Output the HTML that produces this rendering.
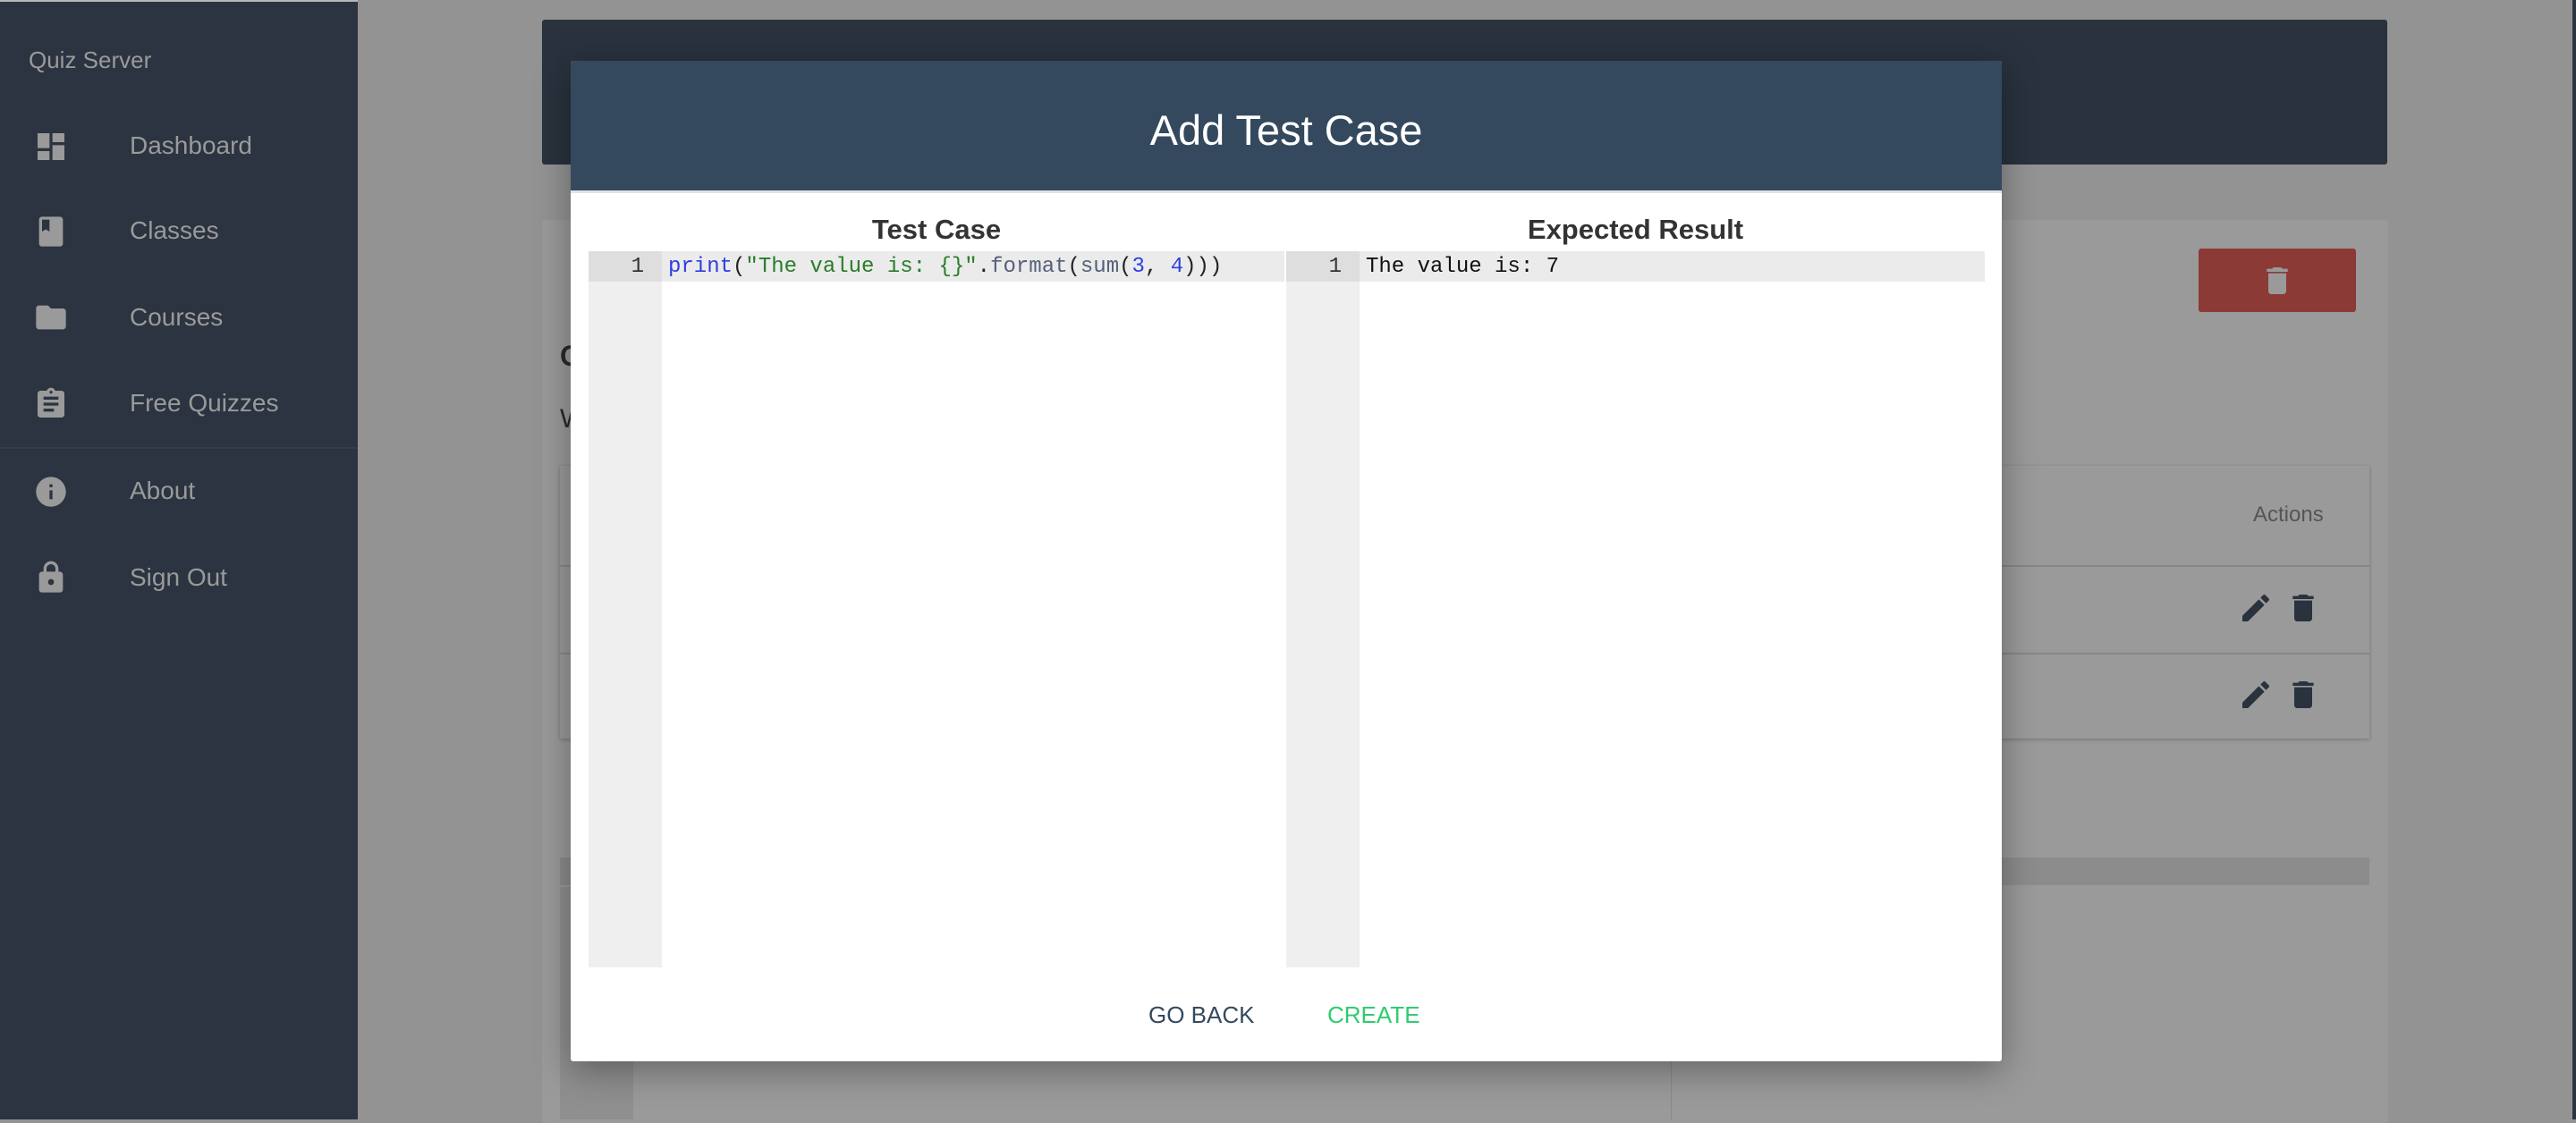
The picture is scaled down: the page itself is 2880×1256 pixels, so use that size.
<!DOCTYPE html>
<html><head><meta charset="utf-8"><style>
*{box-sizing:border-box;margin:0;padding:0}
body{width:2880px;height:1252px;overflow:hidden;background:#939393;font-family:"Liberation Sans",sans-serif;position:relative}
.abs{position:absolute}
#side{left:0;top:0;width:400px;height:1252px;background:#2b3440;border-top:2px solid #b8b8b8}
.nav{position:absolute;left:145px;font-size:28px;color:#9a9a9a;line-height:32px}
.ic{position:absolute;left:37px;width:40px;height:40px}
.code{font-family:"Liberation Mono",monospace;font-size:24px;line-height:34px;white-space:pre}
</style></head><body>
<div id="side" class="abs">
  <div class="abs" style="left:32px;top:50px;font-size:26px;color:#9a9a9a">Quiz Server</div>
  <svg class="ic" style="top:142px" viewBox="0 0 24 24"><path fill="#9a9a9a" d="M3 13h8V3H3v10zm0 8h8v-6H3v6zm10 0h8V11h-8v10zm0-18v6h8V3h-8z"/></svg>
  <div class="nav" style="top:145px">Dashboard</div>
  <svg class="ic" style="top:237px" viewBox="0 0 24 24"><path fill="#9a9a9a" d="M18 2H6c-1.1 0-2 .9-2 2v16c0 1.1.9 2 2 2h12c1.1 0 2-.9 2-2V4c0-1.1-.9-2-2-2zM6 4h5v8l-2.5-1.5L6 12V4z"/></svg>
  <div class="nav" style="top:240px">Classes</div>
  <svg class="ic" style="top:333px" viewBox="0 0 24 24"><path fill="#9a9a9a" d="M10 4H4c-1.1 0-2 .9-2 2v12c0 1.1.9 2 2 2h16c1.1 0 2-.9 2-2V8c0-1.1-.9-2-2-2h-8l-2-2z"/></svg>
  <div class="nav" style="top:337px">Courses</div>
  <svg class="ic" style="top:430px" viewBox="0 0 24 24"><path fill="#9a9a9a" d="M19 3h-4.18C14.4 1.84 13.3 1 12 1c-1.3 0-2.4.84-2.82 2H5c-1.1 0-2 .9-2 2v14c0 1.1.9 2 2 2h14c1.1 0 2-.9 2-2V5c0-1.1-.9-2-2-2zm-7 0c.55 0 1 .45 1 1s-.45 1-1 1-1-.45-1-1 .45-1 1-1zm2 14H7v-2h7v2zm3-4H7v-2h10v2zm0-4H7V7h10v2z"/></svg>
  <div class="nav" style="top:433px">Free Quizzes</div>
  <div class="abs" style="left:0;top:498px;width:400px;height:2px;background:#343e4b"></div>
  <svg class="ic" style="top:528px" viewBox="0 0 24 24"><path fill="#9a9a9a" d="M12 2C6.48 2 2 6.48 2 12s4.48 10 10 10 10-4.48 10-10S17.52 2 12 2zm1 15h-2v-6h2v6zm0-8h-2V7h2v2z"/></svg>
  <div class="nav" style="top:531px">About</div>
  <svg class="ic" style="top:624px" viewBox="0 0 24 24"><path fill="#9a9a9a" d="M18 8h-1V6c0-2.76-2.24-5-5-5S7 3.24 7 6v2H6c-1.1 0-2 .9-2 2v10c0 1.1.9 2 2 2h12c1.1 0 2-.9 2-2V10c0-1.1-.9-2-2-2zm-6 9c-1.1 0-2-.9-2-2s.9-2 2-2 2 .9 2 2-.9 2-2 2zM9 8V6c0-1.66 1.34-3 3-3s3 1.34 3 3v2H9z"/></svg>
  <div class="nav" style="top:628px">Sign Out</div>
</div>
<div class="abs" style="left:2876px;top:0;width:4px;height:1252px;background:#2b3440"></div>
<div class="abs" style="left:606px;top:22px;width:2063px;height:162px;background:#29323d;border-radius:3px"></div>
<div class="abs" style="left:606px;top:246px;width:2064px;height:1010px;background:#9a9a9a;border-radius:3px"></div>
<div class="abs" style="left:2458px;top:278px;width:176px;height:71px;background:#8b3a35;border-radius:3px"></div>
<svg class="abs" style="left:2526px;top:292px;width:40px;height:44px" viewBox="0 0 24 24"><path fill="#9a9a9a" d="M6 19c0 1.1.9 2 2 2h8c1.1 0 2-.9 2-2V7H6v12zM19 4h-3.5l-1-1h-5l-1 1H5v2h14V4z"/></svg>
<div class="abs" style="left:626px;top:380px;font-size:32px;font-weight:bold;color:#2a2a2a">C</div>
<div class="abs" style="left:626px;top:452px;font-size:30px;color:#2a2a2a">W</div>
<div class="abs" style="left:626px;top:521px;width:2023px;height:305px;background:#9a9a9a;box-shadow:0 1px 4px rgba(0,0,0,.25)"></div>
<div class="abs" style="left:2519px;top:562px;font-size:24px;color:#555">Actions</div>
<div class="abs" style="left:626px;top:632px;width:2023px;height:2px;background:#878787"></div>
<div class="abs" style="left:626px;top:730px;width:2023px;height:2px;background:#878787"></div>
<svg class="abs" style="left:2502px;top:660px;width:40px;height:40px" viewBox="0 0 24 24"><path fill="#29323d" d="M3 17.25V21h3.75L17.81 9.94l-3.75-3.75L3 17.25zM20.71 7.04a1 1 0 000-1.41l-2.34-2.34a1 1 0 00-1.41 0l-1.83 1.830 3.75 3.75 1.83-1.83z"/></svg>
<svg class="abs" style="left:2555px;top:660px;width:40px;height:40px" viewBox="0 0 24 24"><path fill="#29323d" d="M6 19c0 1.1.9 2 2 2h8c1.1 0 2-.9 2-2V7H6v12zM19 4h-3.5l-1-1h-5l-1 1H5v2h14V4z"/></svg>
<svg class="abs" style="left:2502px;top:757px;width:40px;height:40px" viewBox="0 0 24 24"><path fill="#29323d" d="M3 17.25V21h3.75L17.81 9.94l-3.75-3.75L3 17.25zM20.71 7.04a1 1 0 000-1.41l-2.34-2.34a1 1 0 00-1.41 0l-1.83 1.83 3.75 3.75 1.83-1.83z"/></svg>
<svg class="abs" style="left:2555px;top:757px;width:40px;height:40px" viewBox="0 0 24 24"><path fill="#29323d" d="M6 19c0 1.1.9 2 2 2h8c1.1 0 2-.9 2-2V7H6v12zM19 4h-3.5l-1-1h-5l-1 1H5v2h14V4z"/></svg>
<div class="abs" style="left:626px;top:959px;width:2023px;height:31px;background:#8c8c8c"></div>
<div class="abs" style="left:626px;top:992px;width:82px;height:260px;background:#8f8f8f"></div>
<div class="abs" style="left:1868px;top:992px;width:1px;height:260px;background:#8a8a8a"></div>
<div class="abs" style="left:638px;top:68px;width:1600px;height:1119px;background:#fff;border-radius:3px;box-shadow:0 10px 40px rgba(0,0,0,.35);overflow:hidden">
  <div style="height:148px;background:#34495e;border-bottom:3px solid #dfe3e8;color:#fff;font-size:47px;text-align:center;line-height:156px">Add Test Case</div>
  <div class="abs" style="left:20px;top:171px;width:778px;text-align:center;font-size:31px;font-weight:bold;color:#333">Test Case</div>
  <div class="abs" style="left:800px;top:171px;width:781px;text-align:center;font-size:31px;font-weight:bold;color:#333">Expected Result</div>
  <div class="abs" style="left:20px;top:213px;width:778px;height:801px">
    <div class="abs" style="left:0;top:0;width:82px;height:801px;background:#efefef"></div>
    <div class="abs" style="left:0;top:0;width:778px;height:34px;background:#ebebeb"></div>
    <div class="abs" style="left:0;top:0;width:82px;height:34px;background:#dedede"></div>
    <div class="abs code" style="left:0;top:1px;width:62px;text-align:right;color:#333">1</div>
    <div class="abs code" style="left:89px;top:1px;color:#222"><span style="color:#2f3ee0">print</span>(<span style="color:#2a7d2a">"The value is: {}"</span>.<span style="color:#56607a">format</span>(<span style="color:#56607a">sum</span>(<span style="color:#2f3ee0">3</span>, <span style="color:#2f3ee0">4</span>)))</div>
  </div>
  <div class="abs" style="left:800px;top:213px;width:781px;height:801px">
    <div class="abs" style="left:0;top:0;width:82px;height:801px;background:#efefef"></div>
    <div class="abs" style="left:0;top:0;width:781px;height:34px;background:#ebebeb"></div>
    <div class="abs" style="left:0;top:0;width:82px;height:34px;background:#dedede"></div>
    <div class="abs code" style="left:0;top:1px;width:62px;text-align:right;color:#333">1</div>
    <div class="abs code" style="left:89px;top:1px;color:#111">The value is: 7</div>
  </div>
  <div class="abs" style="left:646px;top:1052px;font-size:26px;color:#34495e">GO BACK</div>
  <div class="abs" style="left:846px;top:1052px;font-size:26px;color:#2ecc71">CREATE</div>
</div>
</body></html>
